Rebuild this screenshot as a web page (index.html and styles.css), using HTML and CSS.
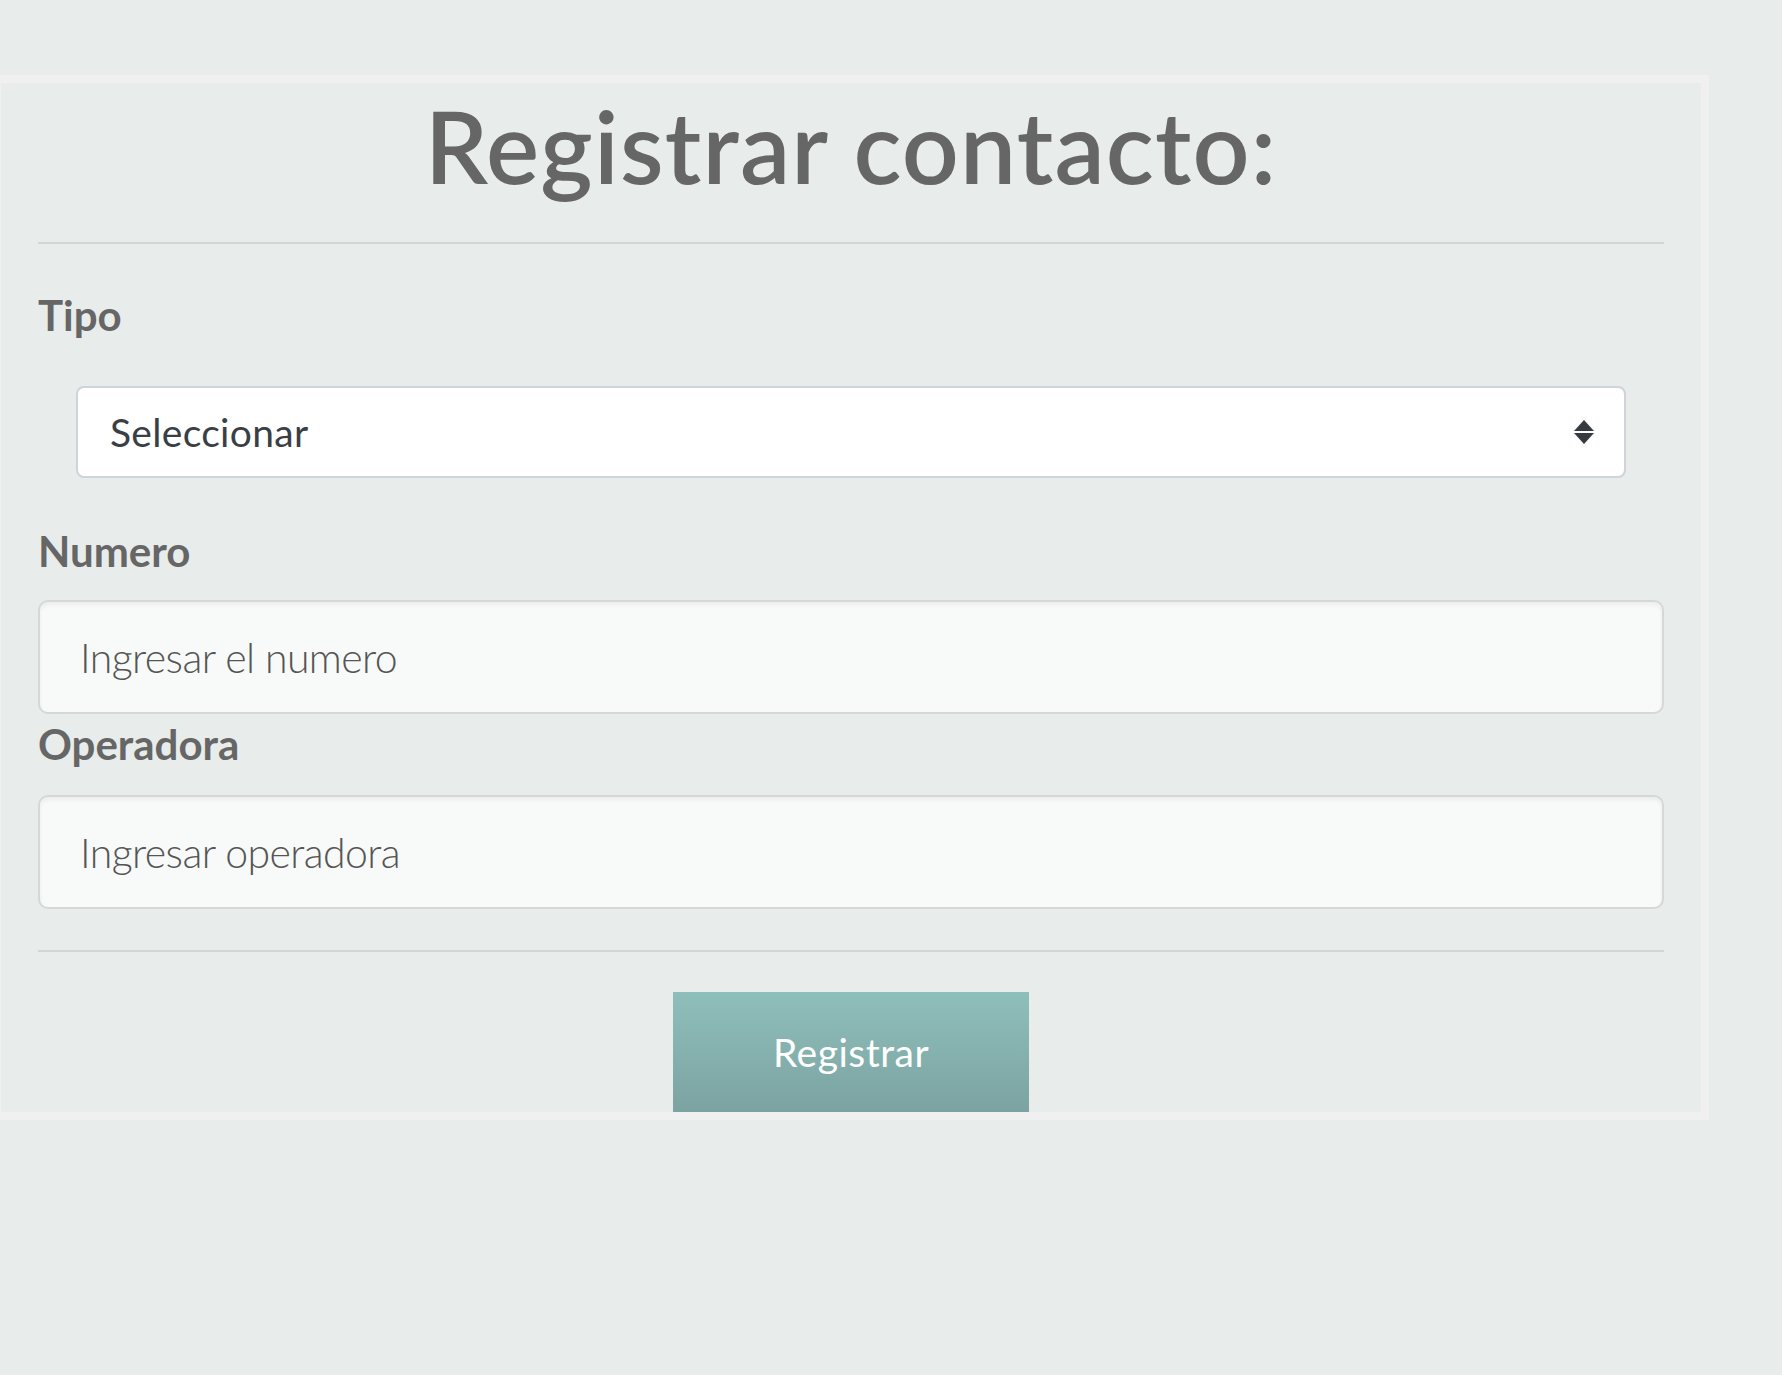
FILE: index.html
```html
<!DOCTYPE html>
<html lang="es">
<head>
<meta charset="utf-8">
<title>Registrar contacto</title>
<link rel="stylesheet" href="styles.css">
</head>
<body>
  <div class="card">
    <h1 class="title">Registrar contacto:</h1>
    <div class="form">
      <hr class="rule rule-top">
      <label class="label label-tipo" for="tipo">Tipo</label>
      <div class="select-wrap">
        <select id="tipo" class="select">
          <option>Seleccionar</option>
        </select>
        <svg class="select-arrows" width="20" height="24" viewBox="0 0 20 24" aria-hidden="true">
          <path d="M10 0 L20 11 L0 11 Z" fill="#343a40"/>
          <path d="M0 13 L20 13 L10 24 Z" fill="#343a40"/>
        </svg>
      </div>
      <label class="label label-numero" for="numero">Numero</label>
      <input id="numero" class="input input-numero" type="text" placeholder="Ingresar el numero">
      <label class="label label-operadora" for="operadora">Operadora</label>
      <input id="operadora" class="input input-operadora" type="text" placeholder="Ingresar operadora">
      <hr class="rule rule-bottom">
      <div class="actions">
        <button class="btn" type="button">Registrar</button>
      </div>
    </div>
  </div>
</body>
</html>
```
FILE: styles.css
```css
html, body {
  margin: 0;
  padding: 0;
}
body {
  background: #e8ecea;
  font-family: Lato, "Open Sans", sans-serif;
  padding-top: 75px;
  overflow: hidden;
}
.card {
  box-sizing: border-box;
  width: 1716px;
  height: 1045px;
  margin-left: -7px;
  border: 8px solid #f1f0f0;
  background: #e8ecea;
  overflow: hidden;
}
.title {
  margin: 2px 0 0;
  text-align: center;
  font-size: 100px;
  line-height: 120px;
  font-weight: 600;
  color: #666;
  letter-spacing: 1.2px;
}
.form {
  padding: 0 37px;
  display: flex;
  flex-direction: column;
}
.rule {
  margin: 0;
  border: 0;
  border-top: 2px solid #d2d6d5;
  height: 0;
}
.rule-top { margin-top: 37px; }
.rule-bottom { margin-top: 41px; }
.label {
  display: block;
  font-size: 42px;
  line-height: 50px;
  font-weight: 700;
  color: #666;
}
.label-tipo { margin-top: 46px; }
.label-numero { margin-top: 48px; }
.label-operadora { margin-top: 5px; }
.select-wrap {
  position: relative;
  margin: 46px 38px 0;
}
.select {
  -webkit-appearance: none;
  appearance: none;
  box-sizing: border-box;
  width: 100%;
  height: 92px;
  border: 2px solid #ced4da;
  border-radius: 8px;
  background: #fff;
  padding: 0 32px;
  font-family: Lato, "Open Sans", sans-serif;
  font-size: 39px;
  letter-spacing: 0.3px;
  color: #3a3f45;
  outline: none;
}
.select-arrows {
  position: absolute;
  right: 32px;
  top: 34px;
  pointer-events: none;
}
.input {
  box-sizing: border-box;
  width: 100%;
  height: 114px;
  border: 2px solid #d6d8d8;
  border-radius: 10px;
  background: #f8faf9;
  box-shadow: inset 0 3px 4px rgba(0, 0, 0, 0.05);
  padding: 0 40px;
  font-family: Lato, "Open Sans", sans-serif;
  font-size: 41px;
  font-weight: 300;
  letter-spacing: -0.6px;
  color: #555;
  outline: none;
}
.input::placeholder {
  color: #555;
  font-weight: 300;
  opacity: 1;
}
.input-numero { margin-top: 24px; }
.input-operadora { margin-top: 26px; }
.actions {
  display: flex;
  justify-content: center;
  margin-top: 40px;
}
.btn {
  width: 356px;
  height: 120px;
  border: 0;
  border-radius: 0;
  background: linear-gradient(to bottom, #8fbfbb, #7ba3a1);
  color: #fff;
  font-family: Lato, "Open Sans", sans-serif;
  font-size: 39px;
  font-weight: 400;
  letter-spacing: 0.5px;
  padding: 0;
}
```
